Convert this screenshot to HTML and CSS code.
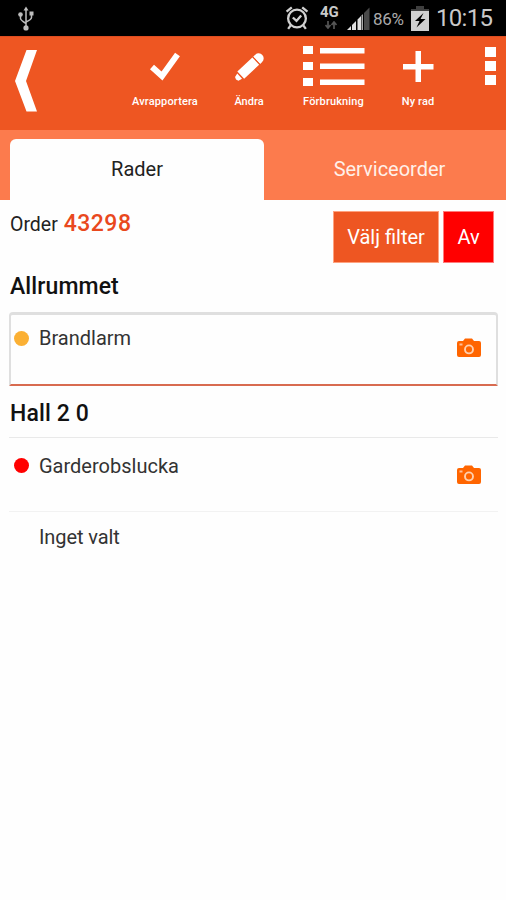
FILE: index.html
```html
<!DOCTYPE html>
<html lang="sv">
<head>
<meta charset="utf-8">
<title>Order 43298</title>
<link rel="stylesheet" href="styles.css">
</head>
<body>
<svg class="defs" aria-hidden="true">
  <symbol id="camera" viewBox="0 0 24 19">
    <path fill="#ff6500" d="M2 3H6L8 .5H15L17 3H22Q24 3 24 5V17Q24 19 22 19H2Q0 19 0 17V5Q0 3 2 3Z"/>
    <circle cx="12" cy="11.4" r="4" fill="none" stroke="#ffd0ae" stroke-width="1.9"/>
    <path fill="#ffc199" d="M2.500 5.500h3v2h-3z"/>
  </symbol>
</svg>
<header class="status">
  <svg class="usb" viewBox="0 0 16 24" fill="none" stroke="#bdbdbd" stroke-width="1.5">
    <path d="M8 3V21M2.5 8V12Q2.5 13.5 8 17M13.500 7V11Q13.500 13 8 15.500"/>
    <path fill="#bdbdbd" stroke="none" d="M8 0L10.500 4H5.500ZM11.500 5h4v4h-4z"/>
    <circle cx="2.500" cy="8" r="2.300" fill="#bdbdbd" stroke="none"/>
    <circle cx="8" cy="21.400" r="2.600" fill="#bdbdbd" stroke="none"/>
  </svg>
  <svg class="alarm" viewBox="0 0 22 23" fill="none" stroke="#d0d0d0" stroke-width="2.200">
    <circle cx="11" cy="12" r="8.500"/>
    <path d="M1 5.500L6 1.300M21 5.500L16 1.300M5 18.500L2.500 22M17 18.500L19.500 22M7 11L10.500 14.300L15 9"/>
  </svg>
  <div class="network">
    <span>4G</span>
    <svg class="arrows" viewBox="0 0 12 8" fill="none" stroke="#555" stroke-width="1.700"><path d="M3 0V6M.5 4L3 7L5.500 4M9 8V2M6.500 4L9 1L11.500 4"/></svg>
  </div>
  <svg class="signal" viewBox="0 0 24 24">
    <path fill="#dedede" d="M0 23L4 19V23ZM5 18L9 14V23H5ZM10.500 12.500L14 9V23H10.500Z"/>
    <path fill="#aaa" d="M14.500 8.500L16 7V23H14.500Z"/>
    <path fill="#4a4a4a" d="M17 6L22.500 .5V23H17Z"/>
  </svg>
  <span class="percent">86%</span>
  <svg class="battery" viewBox="0 0 18 25">
    <path fill="#3f3f3f" d="M5 0H13V3H18V7H0V3H5Z"/>
    <path fill="#d0d0d0" d="M0 5H18V25H0Z"/>
    <path fill="#000" d="M12.500 7L4 15H8.500L5.500 21.500L14.500 13H9.500Z"/>
  </svg>
  <span class="time">10:15</span>
</header>
<nav class="toolbar">
  <svg class="back" viewBox="0 0 22 62"><path fill="#fff" d="M11.500 0H22L11 31L22 61.500H11.500L0 31Z"/></svg>
  <div class="action">
    <svg class="icon" viewBox="0 0 62 42"><path fill="none" stroke="#fff" stroke-width="6" d="M18 22L28 31L43.500 9.500"/></svg>
    <span class="label wide">Avrapportera</span>
  </div>
  <div class="action">
    <svg class="icon" viewBox="0 0 62 42">
      <g fill="#fff" transform="translate(18 34.500) rotate(-43)"><path d="M0 0L1 -2.500L5 -3.500V3.500L1 2.500ZM6.500 -5H27V5H6.500ZM28.500 -5A5 5 0 0 1 28.500 5Z"/><path d="M28.500 -5H31A5 5 0 0 1 31 5H28.500Z"/></g>
    </svg>
    <span class="label">Ändra</span>
  </div>
  <div class="action">
    <svg class="icon" viewBox="0 0 62 42"><path fill="#fff" d="M0 1h10v8H0zM17 3h44.500v5.500H17zM0 17h10v8H0zM17 18.500h44.500v5.500H17zM0 33h10v8H0zM17 34.500h44.500v5.500H17z"/></svg>
    <span class="label wide">Förbrukning</span>
  </div>
  <div class="action">
    <svg class="icon" viewBox="0 0 62 42"><path fill="#fff" d="M28.500 6h5.500v13h12.500v5.500H34v12.500h-5.500V24.500H16V19h12.500z"/></svg>
    <span class="label wide">Ny rad</span>
  </div>
  <svg class="more" viewBox="0 0 11 38"><path fill="#fff" d="M0 0h11v10H0zM0 14h11v10H0zM0 28h11v10H0z"/></svg>
</nav>
<div class="tabs">
  <div class="tab active"><span>Rader</span></div>
  <div class="tab"><span>Serviceorder</span></div>
</div>
<main>
  <div class="order">
    <p class="number">Order <b>43298</b></p>
    <button class="filter">Välj filter</button>
    <button class="off">Av</button>
  </div>
  <h2>Allrummet</h2>
  <div class="row selected"><i class="dot amber"></i><span class="name">Brandlarm</span><svg class="camera"><use href="#camera"/></svg></div>
  <h2 class="second">Hall 2 0</h2>
  <div class="row"><i class="dot red"></i><span class="name">Garderobslucka</span><svg class="camera"><use href="#camera"/></svg></div>
  <div class="row last"><i class="dot"></i><span class="name">Inget valt</span></div>
</main>
</body>
</html>
```
FILE: styles.css
```css
* { box-sizing: border-box; }
body { margin: 0; background: #fefefe; color: #222; font-family: Roboto, sans-serif; font-size: 20px; }
svg { display: block; flex: none; }
.defs { display: none; }

.status { display: flex; height: 36px; background: #000; color: #c9c9c9; align-items: flex-start; }
.usb { width: 16px; height: 25px; margin: 6px 0 0 18px; }
.alarm { width: 24px; height: 24px; margin: 6px 0 0 251px; }
.network { width: 20px; margin: 5px 0 0 11px; font-size: 15px; line-height: 15px; font-weight: 700; }
.network span { display: block; height: 15px; }
.arrows { width: 12px; height: 8px; margin: 1px 0 0 5px; }
.signal { width: 24px; height: 24px; margin: 7px 0 0 7px; }
.percent { width: 34px; margin: 9px 0 0 2px; font-size: 17px; line-height: 20px; color: #aaa; letter-spacing: -.3px; }
.battery { width: 18px; height: 25px; margin: 6px 0 0 4px; }
.time { margin: 4px 0 0 7px; font-size: 24px; line-height: 29px; letter-spacing: -.7px; white-space: nowrap; }

.toolbar { display: grid; grid-template-columns: 122px 86px 82px 87px 82px 1fr; height: 94px; background: #ee5622; color: #fff; border-top: 1px solid #dd4c20; }
.back { width: 22px; height: 62px; margin: 13px 0 0 15px; }
.action { display: flex; flex-direction: column; align-items: center; padding-top: 8px; }
.icon { width: 62px; height: 42px; }
.label { margin-top: 8px; font-size: 11px; line-height: 14px; font-weight: 500; white-space: nowrap; }
.wide { letter-spacing: .15px; }
.more { width: 11px; height: 38px; margin: 10px 0 0 26px; }

.tabs { display: flex; height: 70px; padding: 9px 0 0 10px; background: #fc7b4d; }
.tab { width: 254px; height: 61px; padding-top: 17px; text-align: center; line-height: 26px; color: #fff0e9; }
.tab + .tab { width: 242px; padding-left: 9px; }
.active { background: #fefefe; color: #222; border-radius: 6px 6px 0 0; }

main { padding: 0 8px 0 9px; }
.order { display: flex; height: 72px; padding-top: 11px; }
.number { flex: 1; margin: 0; padding-left: 1px; line-height: 26px; font-size: 19.500px; }
.number b { font-size: 23px; color: #e9481d; font-weight: 500; letter-spacing: .5px; margin-left: 1px; }
button { height: 52px; margin: 0; padding: 0; border: 1px solid #ffa27f; color: #fff; font: 20px Roboto, sans-serif; }
.filter { width: 106px; background: #ee5622; }
.off { width: 51px; margin: 0 4px; background: #f00; border-color: #ff7b7b; }
h2 { margin: 0; padding: 1px 1px 0; height: 40px; font-size: 23px; line-height: 28px; font-weight: 500; letter-spacing: .1px; color: #111; }
.second { height: 51px; padding-top: 14px; }
.row { display: flex; height: 74px; padding: 0 17px 0 5px; border-top: 1px solid #e9e9e9; color: #333; }
.selected { height: 74px; border: 2px solid #dfdfdf; border-top-width: 3px; border-bottom: 2px solid #d86b50; border-radius: 4px 4px 1px 1px; padding: 0 15px 0 3px; }
.dot { width: 15px; height: 15px; margin-top: 20px; border-radius: 50%; }
.selected .dot { margin-top: 16px; }
.amber { background: #fbb034; }
.red { background: #f00; }
.name { flex: 1; margin: 14px 0 0 10px; line-height: 28px; }
.selected .name { margin-top: 9px; }
.camera { width: 24px; height: 19px; margin-top: 27px; }
.selected .camera { margin-top: 23px; }
.last { border-top-color: #f2f2f2; }
.last .name { margin-top: 11px; letter-spacing: -.1px; }
```
